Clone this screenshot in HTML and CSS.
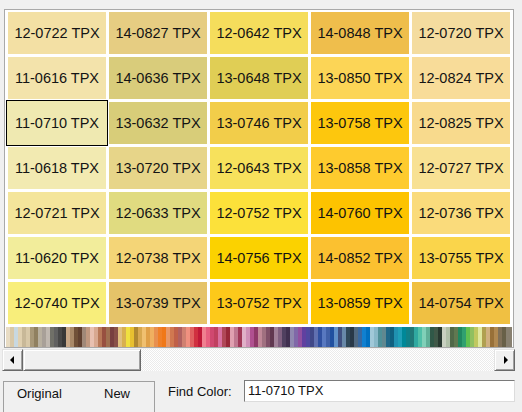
FILE: index.html
```html
<!DOCTYPE html>
<html>
<head>
<meta charset="utf-8">
<link rel="stylesheet" href="styles.css">
</head>
<body>
<div class="panel">
  <div class="grid">
    <div class="cell" style="background:#f3e0a4">12-0722 TPX</div>
    <div class="cell" style="background:#e6cd82">14-0827 TPX</div>
    <div class="cell" style="background:#f5dd5c">12-0642 TPX</div>
    <div class="cell" style="background:#efbe4c">14-0848 TPX</div>
    <div class="cell" style="background:#f4dc9f">12-0720 TPX</div>

    <div class="cell" style="background:#f3e3ab">11-0616 TPX</div>
    <div class="cell" style="background:#d9cc7b">14-0636 TPX</div>
    <div class="cell" style="background:#e0ce55">13-0648 TPX</div>
    <div class="cell" style="background:#fcd556">13-0850 TPX</div>
    <div class="cell" style="background:#f8dc99">12-0824 TPX</div>

    <div class="cell selected" style="background:#efe9b1">11-0710 TPX</div>
    <div class="cell" style="background:#d8cd79">13-0632 TPX</div>
    <div class="cell" style="background:#f2cd4a">13-0746 TPX</div>
    <div class="cell" style="background:#fdc70d">13-0758 TPX</div>
    <div class="cell" style="background:#f8da8d">12-0825 TPX</div>

    <div class="cell" style="background:#f2eab1">11-0618 TPX</div>
    <div class="cell" style="background:#e7d589">13-0720 TPX</div>
    <div class="cell" style="background:#f7e15c">12-0643 TPX</div>
    <div class="cell" style="background:#fecb2e">13-0858 TPX</div>
    <div class="cell" style="background:#f8e193">12-0727 TPX</div>

    <div class="cell" style="background:#f4e59b">12-0721 TPX</div>
    <div class="cell" style="background:#e0db80">12-0633 TPX</div>
    <div class="cell" style="background:#fce13a">12-0752 TPX</div>
    <div class="cell" style="background:#fdc300">14-0760 TPX</div>
    <div class="cell" style="background:#fadb7b">12-0736 TPX</div>

    <div class="cell" style="background:#f2ed9b">11-0620 TPX</div>
    <div class="cell" style="background:#f4d577">12-0738 TPX</div>
    <div class="cell" style="background:#fbd200">14-0756 TPX</div>
    <div class="cell" style="background:#fbc130">14-0852 TPX</div>
    <div class="cell" style="background:#fad54b">13-0755 TPX</div>

    <div class="cell" style="background:#f8ee7b">12-0740 TPX</div>
    <div class="cell" style="background:#e5c369">13-0739 TPX</div>
    <div class="cell" style="background:#fdc91a">13-0752 TPX</div>
    <div class="cell" style="background:#fec600">13-0859 TPX</div>
    <div class="cell" style="background:#f0c042">14-0754 TPX</div>
  </div>
  <div class="spectrum"></div>
</div>

<div class="scrollbar">
  <div class="sb-btn sb-left"><span class="arrow-left"></span></div>
  <div class="sb-track">
    <div class="sb-thumb"></div>
  </div>
  <div class="sb-btn sb-right"><span class="arrow-right"></span></div>
</div>

<div class="bottom">
  <div class="compare">
    <span class="cmp-original">Original</span>
    <span class="cmp-new">New</span>
  </div>
  <label class="find-label">Find Color:</label>
  <div class="find-input">11-0710 TPX</div>
</div>
</body>
</html>
```

FILE: styles.css
```css
html, body {
  margin: 0;
  padding: 0;
}
body {
  background: #f0f0f0;
  font-family: "Liberation Sans", Arial, sans-serif;
  color: #111;
  width: 522px;
  height: 412px;
  overflow: hidden;
}

.panel {
  box-sizing: border-box;
  width: 510px;
  margin: 9px 0 0 4px;
  border: 1px solid #a9a9a9;
  background: #ffffff;
  padding: 2px 3px 0 3px;
}

.grid {
  display: grid;
  grid-template-columns: repeat(5, 98px);
  grid-auto-rows: 42px;
  gap: 3px;
}

.cell {
  display: flex;
  align-items: center;
  justify-content: center;
  font-size: 14.5px;
  color: #141414;
  white-space: nowrap;
}

.cell.selected {
  box-shadow: 0 0 0 1px #efe9b1;
  outline: 1px solid #000;
  outline-offset: 1px;
}

.spectrum {
  height: 20px;
  margin: 3px -2px 0 -2px;
  background: linear-gradient(to right,
    #e8dcc4 0 4px, #d8c8a8 4px 8px, #c8d8e0 8px 12px, #e0d0b0 12px 16px,
    #c8b898 16px 20px, #d8c8a8 20px 24px, #a89878 24px 28px, #908060 28px 32px,
    #b8b0a0 32px 36px, #a8a098 36px 40px, #c0b8b0 40px 44px, #707068 44px 48px,
    #606060 48px 52px, #484848 52px 56px, #383838 56px 60px, #c8a888 60px 64px,
    #a88868 64px 68px, #705038 68px 72px, #604030 72px 76px, #a08878 76px 80px,
    #c09880 80px 84px, #e8c0b0 84px 88px, #d8a890 88px 92px, #b87858 92px 96px,
    #985040 96px 100px, #a07050 100px 104px, #784040 104px 108px, #885048 108px 112px,
    #e0c080 112px 116px, #d8b050 116px 120px, #f0e040 120px 124px, #e8c030 124px 128px,
    #b08830 128px 132px, #d8a850 132px 136px, #f0c070 136px 140px, #e0a048 140px 144px,
    #f0b060 144px 148px, #e89050 148px 152px, #f08028 152px 156px, #f07818 156px 160px,
    #e89868 160px 164px, #d07850 164px 168px, #c06048 168px 172px, #b06060 172px 176px,
    #d08070 176px 180px, #f09080 180px 184px, #e06060 184px 188px, #d03040 188px 192px,
    #c01838 192px 196px, #f08090 196px 200px, #e86080 200px 204px, #d04870 204px 208px,
    #c04060 208px 212px, #d870a0 212px 216px, #b04858 216px 220px, #982838 220px 224px,
    #e0a0b0 224px 228px, #c07890 228px 232px, #a03858 232px 236px, #e0b0c8 236px 240px,
    #d090b8 240px 244px, #b05090 244px 248px, #903868 248px 252px, #c08898 252px 256px,
    #a07080 256px 260px, #805068 260px 264px, #603850 264px 268px, #a08098 268px 272px,
    #806080 272px 276px, #504060 276px 280px, #403050 280px 284px, #9088b0 284px 288px,
    #8068a8 288px 292px, #9050a0 292px 296px, #6040a0 296px 300px, #5048a0 300px 304px,
    #404888 304px 308px, #6070b0 308px 312px, #3050a0 312px 316px, #5878c0 316px 320px,
    #4060a8 320px 324px, #2050a0 324px 328px, #6090c8 328px 332px, #405080 332px 336px,
    #6888a8 336px 340px, #304858 340px 344px, #283848 344px 348px, #506880 348px 352px,
    #3868a0 352px 356px, #1080d0 356px 360px, #0070c0 360px 364px, #a0c8d8 364px 368px,
    #88b8c8 368px 372px, #509098 372px 376px, #608890 376px 380px, #206888 380px 384px,
    #106080 384px 388px, #2090b0 388px 392px, #20a0b8 392px 396px, #008898 396px 400px,
    #108088 400px 404px, #207878 404px 408px, #30a8a0 408px 412px, #50c0a8 412px 416px,
    #80d0b8 416px 420px, #60b098 420px 424px, #305848 424px 428px, #405848 428px 432px,
    #283830 432px 436px, #c8d0c0 436px 440px, #b0c0a8 440px 444px, #506848 444px 448px,
    #607850 448px 452px, #208860 452px 456px, #30a070 456px 460px, #60c050 460px 464px,
    #90c060 464px 468px, #c0c860 468px 472px, #e0e8a0 472px 476px, #b0a050 476px 480px,
    #d0b080 480px 484px, #987038 484px 488px, #b08850 488px 492px, #807058 492px 496px,
    #686048 496px 500px, #888070 500px 506px);
}

.scrollbar {
  display: flex;
  width: 513px;
  height: 22px;
  margin: 1px 0 0 2px;
}

.sb-btn {
  box-sizing: border-box;
  width: 21px;
  height: 22px;
  flex: none;
  background: #f0f0f0;
  border-top: 1px solid #e3e3e3;
  border-left: 1px solid #e3e3e3;
  border-right: 1px solid #696969;
  border-bottom: 1px solid #696969;
  box-shadow: inset 1px 1px 0 #ffffff, inset -1px -1px 0 #a0a0a0;
  display: flex;
  align-items: center;
  justify-content: center;
}

.arrow-left {
  width: 0;
  height: 0;
  border-top: 4px solid transparent;
  border-bottom: 4px solid transparent;
  border-right: 4px solid #000;
  margin-right: 2px;
}

.arrow-right {
  width: 0;
  height: 0;
  border-top: 4px solid transparent;
  border-bottom: 4px solid transparent;
  border-left: 4px solid #000;
  margin-left: 2px;
}

.sb-track {
  flex: 1;
  height: 22px;
  background: repeating-conic-gradient(#ffffff 0 25%, #ebebeb 0 50%) 0 0 / 2px 2px;
  display: flex;
}

.sb-thumb {
  box-sizing: border-box;
  width: 118px;
  height: 22px;
  background: #f0f0f0;
  border-top: 1px solid #e3e3e3;
  border-left: 1px solid #e3e3e3;
  border-right: 1px solid #696969;
  border-bottom: 1px solid #696969;
  box-shadow: inset 1px 1px 0 #ffffff, inset -1px -1px 0 #a0a0a0;
}

.bottom {
  display: flex;
  align-items: flex-start;
  margin-top: 9px;
  font-size: 13px;
  line-height: 15px;
}

.compare {
  box-sizing: border-box;
  width: 152px;
  height: 40px;
  margin: 1px 0 0 3px;
  border: 1px solid #a0a0a0;
  padding: 4px 0 0 13px;
  display: flex;
  flex: none;
}

.cmp-original {
  width: 87px;
}

.find-label {
  margin: 4px 0 0 13px;
  width: 63px;
  white-space: nowrap;
  flex: none;
}

.find-input {
  box-sizing: border-box;
  width: 271px;
  height: 22px;
  margin-left: 13px;
  background: #ffffff;
  border-top: 1px solid #7a7a7a;
  border-left: 1px solid #7a7a7a;
  border-right: 1px solid #dcdcdc;
  border-bottom: 1px solid #dcdcdc;
  padding: 2px 0 0 3px;
  line-height: 15px;
  white-space: nowrap;
  flex: none;
}
```
